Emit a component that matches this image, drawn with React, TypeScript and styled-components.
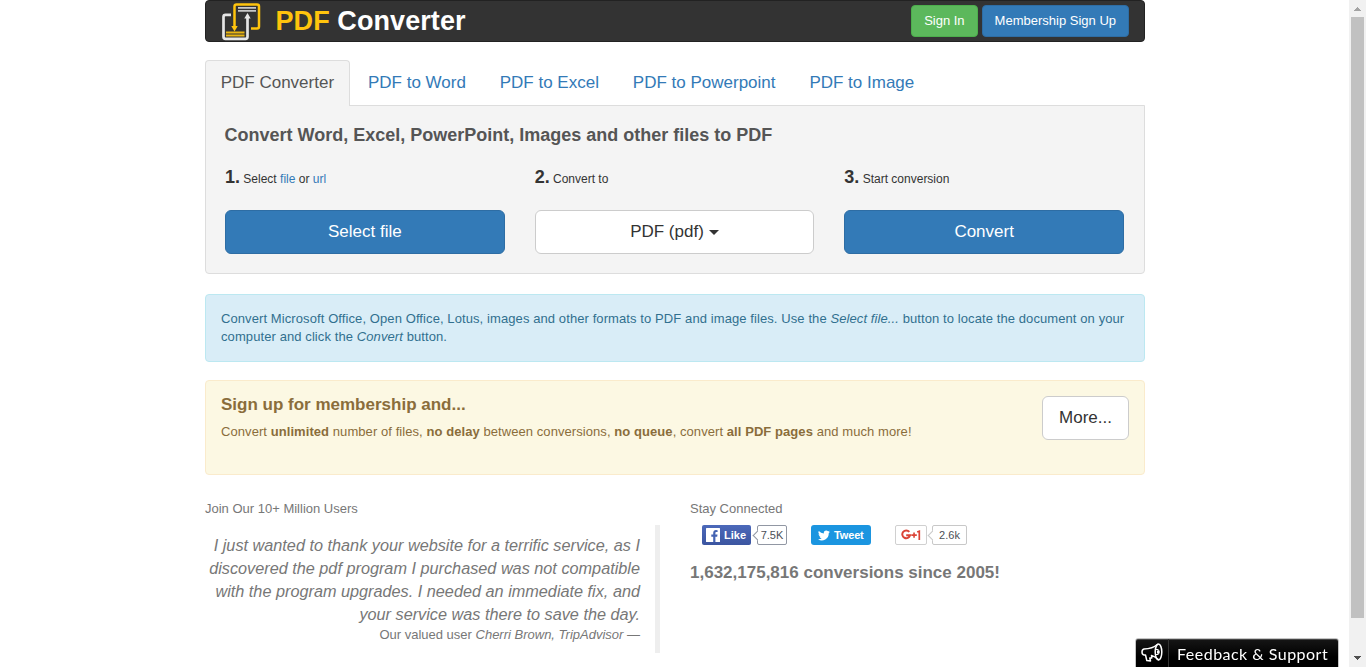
import React from "react";
import styled, { createGlobalStyle } from "styled-components";

const GlobalStyle = createGlobalStyle`
  * { box-sizing: border-box; }
  html, body { margin: 0; padding: 0; height: 667px; overflow: hidden; background: #fff; }
  body { font: 13px/18px "Liberation Sans", Arial, sans-serif; color: #333; }
  button { font-family: inherit; cursor: pointer; }
  a { color: #337ab7; text-decoration: none; }
  p, h1, h2, h3 { margin: 0; }
`;

const Page = styled.div`
  display: flex;
  height: 667px;
  overflow: hidden;
`;

const Viewport = styled.div`
  flex: 1;
  padding-left: 205px;
`;

const Container = styled.main`
  width: 940px;
`;

const Navbar = styled.header`
  display: flex;
  align-items: center;
  height: 42px;
  padding: 0 15px;
  border: 1px solid #222;
  border-radius: 4px;
  background: #333;
`;

const Brand = styled.h1`
  flex: 1;
  display: flex;
  align-items: center;
  font-size: 27px;
  line-height: 38px;
  letter-spacing: 0.08px;
  color: #fff;
  svg { margin-right: 14.5px; }
  em { font-style: normal; color: #ffc40d; }
`;

const BrandName = styled.span`
  margin-top: -1px;
`;

const NavButton = styled.button<{ $tone: "green" | "blue" }>`
  height: 32px;
  margin-left: 4px;
  padding: 0 12px 1px;
  border: 1px solid ${(p) => (p.$tone === "green" ? "#4cae4c" : "#2e6da4")};
  border-radius: 4px;
  background: ${(p) => (p.$tone === "green" ? "#5cb85c" : "#337ab7")};
  color: #fff;
  font-size: 13px;
`;

const Tabs = styled.nav`
  display: flex;
  margin-top: 18px;
  height: 46px;
`;

const Tab = styled.a<{ $active?: boolean }>`
  height: 46px;
  margin-right: 2px;
  padding: 10px 15.2px 10px 14.7px;
  border: 1px solid ${(p) => (p.$active ? "#ddd" : "transparent")};
  border-bottom: 0;
  border-radius: 4px 4px 0 0;
  background: ${(p) => (p.$active ? "#f4f4f4" : "transparent")};
  color: ${(p) => (p.$active ? "#555" : "#337ab7")};
  font-size: 17px;
  line-height: 24px;
  white-space: nowrap;
  position: relative;
  z-index: 1;
`;

const Panel = styled.section`
  height: 169px;
  margin-top: -1px;
  padding: 18px 19px 0;
  border: 1px solid #ddd;
  border-radius: 0 0 4px 4px;
  background: #f4f4f4;
`;

const PanelTitle = styled.h2`
  margin-left: -0.5px;
  font-size: 18px;
  line-height: 22px;
  color: #555;
`;

const Steps = styled.div`
  display: grid;
  grid-template-columns: repeat(3, 1fr);
  gap: 30px;
  width: 899px;
  margin-top: 19px;
`;

const StepLabel = styled.p`
  height: 24px;
  font-size: 12px;
  line-height: 24px;
  margin-bottom: 21px;
  white-space: nowrap;
  b { font-size: 18px; }
`;

const LargeButton = styled.button<{ $primary?: boolean; $fluid?: boolean }>`
  display: flex;
  align-items: center;
  justify-content: center;
  width: ${(p) => (p.$fluid ? "100%" : "87px")};
  height: 44px;
  padding: 0 0 1px;
  border: 1px solid ${(p) => (p.$primary ? "#2e6da4" : "#ccc")};
  border-radius: 6px;
  background: ${(p) => (p.$primary ? "#337ab7" : "#fff")};
  color: ${(p) => (p.$primary ? "#fff" : "#333")};
  font-size: 17px;
  white-space: nowrap;
`;

const Caret = styled.span`
  margin: 2px 0 0 5px;
  border-top: 5px solid #333;
  border-left: 5px solid transparent;
  border-right: 5px solid transparent;
`;

const Alert = styled.section<{ $kind: "info" | "warning" }>`
  display: flex;
  justify-content: space-between;
  align-items: flex-start;
  height: ${(p) => (p.$kind === "info" ? "68px" : "95px")};
  margin-top: ${(p) => (p.$kind === "info" ? "20px" : "18px")};
  padding: 15px;
  border: 1px solid ${(p) => (p.$kind === "info" ? "#bce8f1" : "#faebcc")};
  border-radius: 4px;
  background: ${(p) => (p.$kind === "info" ? "#d9edf7" : "#fcf8e3")};
  color: ${(p) => (p.$kind === "info" ? "#31708f" : "#8a6d3b")};
  p {
    letter-spacing: ${(p) => (p.$kind === "info" ? "0.092px" : "0.07px")};
    white-space: nowrap;
  }
`;

const AlertTitle = styled.h3`
  font-size: 17px;
  line-height: 18px;
  margin-bottom: 9px;
`;

const Columns = styled.div`
  display: grid;
  grid-template-columns: 455px 455px;
  column-gap: 30px;
  margin-top: 25px;
  color: #777;
`;

const Quote = styled.blockquote`
  margin: 7px 0 0;
  height: 128px;
  padding: 9px 15px 0 0;
  border-right: 5px solid #eee;
  text-align: right;
  white-space: nowrap;
`;

const QuoteText = styled.p`
  font-size: 16.25px;
  line-height: 23px;
  font-style: italic;
`;

const Social = styled.div`
  display: flex;
  align-items: center;
  height: 20px;
  margin: 7px 0 0 12px;
`;

const LikeButton = styled.span`
  display: flex;
  align-items: center;
  width: 49px;
  height: 20px;
  padding-left: 4px;
  border-radius: 2px;
  background: linear-gradient(#4c69ba, #3b55a0);
  color: #fff;
  font: bold 11px/20px "Liberation Sans", Arial, sans-serif;
  svg { margin-right: 4px; }
`;

const TweetButton = styled.span`
  display: flex;
  align-items: center;
  width: 60px;
  height: 20px;
  margin-left: 24px;
  padding-left: 7px;
  border-radius: 3px;
  background: #1b95e0;
  color: #fff;
  font-size: 11px;
  font-weight: bold;
  letter-spacing: -0.15px;
  svg { margin-right: 4px; }
`;

const PlusButton = styled.span`
  display: flex;
  align-items: center;
  justify-content: center;
  width: 32px;
  height: 20px;
  margin-left: 24px;
  border: 1px solid #d0d0d0;
  border-radius: 2px;
`;

const Count = styled.span<{ $width: number; $edge: string }>`
  position: relative;
  width: ${(p) => p.$width}px;
  height: 20px;
  margin-left: ${(p) => (p.$width > 32 ? 5 : 6)}px;
  border: 1px solid ${(p) => p.$edge};
  border-radius: 2px;
  background: #fff;
  color: #4b4f56;
  font-size: 11px;
  line-height: 18px;
  text-align: center;
  &::before {
    content: "";
    position: absolute;
    left: -4px;
    top: 6px;
    width: 6px;
    height: 6px;
    border-left: 1px solid ${(p) => p.$edge};
    border-bottom: 1px solid ${(p) => p.$edge};
    background: #fff;
    transform: rotate(45deg);
  }
`;

const Total = styled.h3`
  margin-top: 18px;
  font-size: 17px;
  line-height: 20px;
  white-space: nowrap;
`;

const Feedback = styled.button`
  position: fixed;
  left: 1135px;
  top: 638px;
  display: flex;
  width: 204px;
  height: 32px;
  padding: 0;
  border: 1px solid #c4c4c4;
  border-radius: 3px 3px 0 0;
  background: linear-gradient(#161616, #000 60%);
  box-shadow: inset 0 1px #444;
  color: #fff;
`;

const FeedbackIcon = styled.span`
  width: 33px;
  height: 30px;
  border-right: 1px solid #333;
  svg { display: block; margin: 4px 0 0 5px; }
`;

const FeedbackText = styled.span`
  flex: 1;
  padding-left: 8px;
  text-align: left;
  font: 16px/29px Lato, "Open Sans", sans-serif;
  letter-spacing: 0.48px;
  white-space: nowrap;
`;

const Scrollbar = styled.div`
  display: flex;
  flex-direction: column;
  justify-content: space-between;
  width: 17px;
  height: 667px;
  background: #f1f1f1;
`;

const Thumb = styled.div`
  width: 13px;
  height: 601px;
  margin: 0 2px auto;
  background: #c1c1c1;
`;

const Arrow = ({ down }: { down?: boolean }) => (
  <svg width="17" height="17" viewBox="0 0 17 17" shapeRendering="crispEdges">
    {down ? <path d="M5 6h7v1h-1v1h-1v1H9v1H8v-1H7V8H6V7H5z" fill="#505050" /> : <path d="M5 11h7v-1h-1V9h-1V8H9V7H8v1H7v1H6v1H5z" fill="#a3a3a3" />}
  </svg>
);

const LogoIcon = () => (
  <svg width="40" height="40" viewBox="0 0 40 40" fill="none">
    <path d="M10 13.800H4.500a2 2 0 0 0-2 2v20a2 2 0 0 0 2 2h20a2 2 0 0 0 2-2V16" stroke="#e6e6e6" strokeWidth="2.700" />
    <path d="M23.300 17.500l3.200-5.500 3.200 5.500z" fill="#e6e6e6" />
    <path d="M17 6.900h18M17 9.900h18" stroke="#c8c8c8" strokeWidth="1.900" />
    <path d="M13.500 26V5.500a2 2 0 0 1 2-2h20.500a2 2 0 0 1 2 2V25.400a2 2 0 0 1-2 2H30" stroke="#ffc40d" strokeWidth="2.500" />
    <path d="M10.300 25l3.200 5.500 3.200-5.500z" fill="#ffc40d" />
    <path d="M5 31.500h18.500M5 34.500h18.500" stroke="#e9b512" strokeWidth="1.900" />
  </svg>
);

const FacebookIcon = () => (
  <svg width="14" height="14" viewBox="0 0 14 14">
    <rect width="14" height="14" rx="0.500" fill="#fff" />
    <path d="M7.200 14V8.700H5.300V6.600h1.900V5c0-1.900 1.100-2.900 2.800-2.900l1.600.1v1.900h-1.100c-.9 0-1.100.4-1.100 1.100v1.400h2.100l-.3 2.100H9.400V14z" fill="#4463b2" />
  </svg>
);

const TwitterIcon = () => (
  <svg width="12" height="11" viewBox="0 0 24 20">
    <path fill="#fff" d="M23.900 2.400c-.9.400-1.800.7-2.800.8 1-.6 1.800-1.600 2.200-2.700-1 .6-2 1-3.100 1.200A4.900 4.900 0 0 0 11.800 6.200 14 14 0 0 1 1.700 1a4.900 4.900 0 0 0 1.500 6.600C2.400 7.600 1.600 7.400 1 7a4.900 4.900 0 0 0 3.900 4.900c-.7.200-1.500.2-2.200.1a4.900 4.900 0 0 0 4.600 3.400A9.900 9.900 0 0 1 0 17.500 14 14 0 0 0 21.500 5c1-.7 1.800-1.600 2.400-2.600z" />
  </svg>
);

const GoogleIcon = () => (
  <svg width="20" height="12" viewBox="0 0 20 12" fill="none" stroke="#db4437" strokeWidth="2">
    <path d="M8.300 2.900A3.900 3.900 0 1 0 9 6.200H5.200" />
    <path d="M10.300 6.100h5.500M13.050 3.400v5.400" strokeWidth="1.600" />
    <path d="M16.200 3l2.100-.8V11" strokeWidth="1.700" />
  </svg>
);

const MegaphoneIcon = () => (
  <svg width="22" height="20" viewBox="0 0 22 20" fill="none" stroke="#fff" strokeWidth="1.500" strokeLinejoin="round">
    <path d="M17 1C13 4.500 9 6 3 6Q1 6.500 1 9t2 3h1.500l1.300 5.500 3.700.5-.7-3h2L10.500 12.400Q14 13.500 18 17" />
    <ellipse cx="17.500" cy="9" rx="3.300" ry="8" />
    <path d="M15 6.500h2.500M15 11.500h2.500" strokeWidth="1" />
    <ellipse cx="17.300" cy="9" rx="1.500" ry="2" fill="#fff" stroke="none" />
  </svg>
);

const tabs = ["PDF Converter", "PDF to Word", "PDF to Excel", "PDF to Powerpoint", "PDF to Image"];

export default function App() {
  return (
    <>
      <GlobalStyle />
      <Page>
        <Viewport>
          <Container>
            <Navbar>
              <Brand><LogoIcon /><BrandName><em>PDF</em> Converter</BrandName></Brand>
              <NavButton $tone="green">Sign In</NavButton>
              <NavButton $tone="blue">Membership Sign Up</NavButton>
            </Navbar>
            <Tabs>
              {tabs.map((name, i) => <Tab key={name} href="#" $active={i === 0}>{name}</Tab>)}
            </Tabs>
            <Panel>
              <PanelTitle>Convert Word, Excel, PowerPoint, Images and other files to PDF</PanelTitle>
              <Steps>
                <div>
                  <StepLabel><b>1.</b> Select <a href="#">file</a> or <a href="#">url</a></StepLabel>
                  <LargeButton $primary $fluid>Select file</LargeButton>
                </div>
                <div>
                  <StepLabel><b>2.</b> Convert to</StepLabel>
                  <LargeButton $fluid>PDF (pdf)<Caret /></LargeButton>
                </div>
                <div>
                  <StepLabel><b>3.</b> Start conversion</StepLabel>
                  <LargeButton $primary $fluid>Convert</LargeButton>
                </div>
              </Steps>
            </Panel>
            <Alert $kind="info">
              <div>
                <p>Convert Microsoft Office, Open Office, Lotus, images and other formats to PDF and image files. Use the <i>Select file...</i> button to locate the document on your</p>
                <p>computer and click the <i>Convert</i> button.</p>
              </div>
            </Alert>
            <Alert $kind="warning">
              <div>
                <AlertTitle>Sign up for membership and...</AlertTitle>
                <p>Convert <b>unlimited</b> number of files, <b>no delay</b> between conversions, <b>no queue</b>, convert <b>all PDF pages</b> and much more!</p>
              </div>
              <LargeButton>More...</LargeButton>
            </Alert>
            <Columns>
              <div>
                <p>Join Our 10+ Million Users</p>
                <Quote>
                  <QuoteText>
                    I just wanted to thank your website for a terrific service, as I<br />
                    discovered the pdf program I purchased was not compatible<br />
                    with the program upgrades. I needed an immediate fix, and<br />
                    your service was there to save the day.
                  </QuoteText>
                  <p>Our valued user <i>Cherri Brown, TripAdvisor</i> —</p>
                </Quote>
              </div>
              <div>
                <p>Stay Connected</p>
                <Social>
                  <LikeButton><FacebookIcon />Like</LikeButton>
                  <Count $width={30} $edge="#9197a3">7.5K</Count>
                  <TweetButton><TwitterIcon />Tweet</TweetButton>
                  <PlusButton><GoogleIcon /></PlusButton>
                  <Count $width={35} $edge="#c8c8c8">2.6k</Count>
                </Social>
                <Total>1,632,175,816 conversions since 2005!</Total>
              </div>
            </Columns>
          </Container>
        </Viewport>
        <Scrollbar>
          <Arrow />
          <Thumb />
          <Arrow down />
        </Scrollbar>
      </Page>
      <Feedback>
        <FeedbackIcon><MegaphoneIcon /></FeedbackIcon>
        <FeedbackText>Feedback &amp; Support</FeedbackText>
      </Feedback>
    </>
  );
}
